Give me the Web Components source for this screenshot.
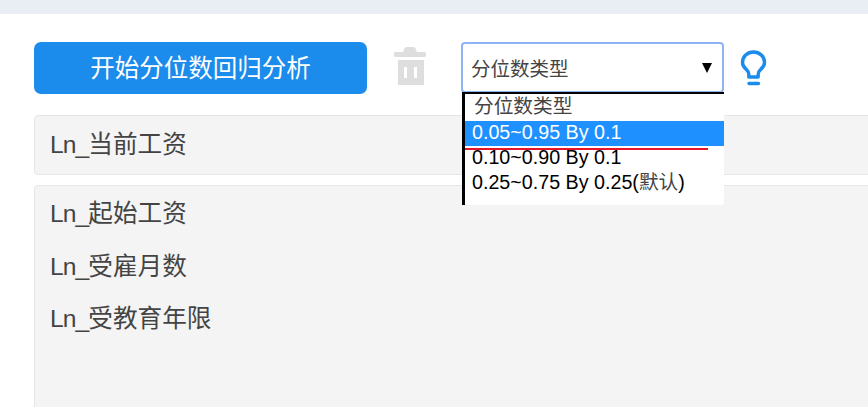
<!DOCTYPE html>
<html lang="zh"><head><meta charset="utf-8">
<style>
html,body{margin:0;padding:0;background:#fff;overflow:hidden;height:407px}
body{font-family:"Liberation Sans","Noto Sans CJK SC",sans-serif}
</style></head><body>
<analysis-page></analysis-page>
<template id="t-page">
<style>
:host{display:block;height:407px;overflow:hidden;color:#444}
.top{height:14px;background:#e9edf4}
.main{padding:28px 0 0 34px;width:860px;box-sizing:content-box}
.bar{display:flex;align-items:flex-start;height:52px;margin-bottom:21px}
.list{display:flex;flex-direction:column;gap:10px}
trash-icon{margin:5px 0 0 27px}
quantile-select{margin-left:35px}
bulb-icon{margin:8px 0 0 15px}
.l{letter-spacing:-.9px}
</style>
<div class="top"></div>
<div class="main">
<div class="bar">
<start-button>开始分位数回归分析</start-button>
<trash-icon></trash-icon>
<quantile-select></quantile-select>
<bulb-icon></bulb-icon>
</div>
<div class="list">
<var-panel style="height:60px;--pt:12px"><var-item><span class="l">Ln_</span>当前工资</var-item></var-panel>
<var-panel style="height:240px;--pt:11px"><var-item><span class="l">Ln_</span>起始工资</var-item><var-item><span class="l">Ln_</span>受雇月数</var-item><var-item><span class="l">Ln_</span>受教育年限</var-item></var-panel>
</div>
</div>
</template>
<script>
function def(name,html){customElements.define(name,class extends HTMLElement{constructor(){super();this.attachShadow({mode:'open'}).innerHTML=html}})}
def('start-button',`<style>:host{display:flex;align-items:center;justify-content:center;width:333px;height:52px;box-sizing:border-box;background:#1b8bec;border-radius:7px;color:#fff;font-size:24.5px;padding-bottom:3px}</style><slot></slot>`);
def('trash-icon',`<style>:host{display:block;width:32px;height:38px}svg{display:block}</style><svg width="32" height="38" viewBox="0 0 32 38"><path fill="#dedede" d="M9 5L10.500 1.500C11 .5 12 0 13 0h6c1 0 2 .5 2.500 1.500L23 5h7.500c.8 0 1.500.7 1.500 1.500v2c0 .8-.7 1.500-1.500 1.500h-29C.7 10 0 9.300 0 8.500v-2C0 5.700.7 5 1.500 5z"/><path fill="#dedede" fill-rule="evenodd" d="M4 13h26v25H4zM10 20v11h3V20zm10 0v11h3V20z"/></svg>`);
def('bulb-icon',`<style>:host{display:block;width:30px;height:38px}svg{display:block}</style><svg width="30" height="38" viewBox="0 0 30 38" fill="none" stroke="#1b8bec" stroke-width="3.400"><path d="M9.800 27v-3c0-2-1-3-2.200-4.200C5.300 17.800 3.500 16 3.500 12.500 3.500 6.500 8.300 2 14.500 2S25.500 6.500 25.500 12.500c0 3.500-1.800 5.300-4.100 7.300-1.200 1.200-2.200 2.200-2.200 4.200v3z" stroke-linejoin="round"/><path d="M10 33.500h9.500" stroke-linecap="round"/></svg>`);
def('var-panel',`<style>:host{display:block;box-sizing:border-box;background:#f4f4f4;border:1px solid #e6e6e6;border-radius:4px;padding:var(--pt) 0 0 15px;width:100%}</style><slot></slot>`);
def('var-item',`<style>:host{display:block;font-size:24.6px;line-height:34px;height:52.500px;color:#444;white-space:nowrap}</style><slot></slot>`);
def('drop-option',`<style>:host{display:block;height:25px;line-height:23px;padding-left:7px;font-size:19.700px;color:#000;white-space:nowrap}:host([sel]){background:#1e90ff;color:#fff}:host([ph]){color:#444;padding-left:9px}</style><slot></slot>`);
def('quantile-select',`<style>
:host{display:block;position:relative;width:263px;height:52px}
.box{box-sizing:border-box;width:263px;height:51px;border:2px solid #8fb4f4;border-radius:4px;background:#fff;display:flex;align-items:center;justify-content:space-between;padding:0 10px 0 8px;font-size:19.500px;color:#444}
.arrow{width:0;height:0;border-left:5.500px solid transparent;border-right:5.500px solid transparent;border-top:10px solid #000}
.menu{position:absolute;left:1px;top:50px;width:262px;height:113px;box-sizing:border-box;background:#fff;border-left:3px solid #000;border-top:2px solid #000;border-radius:0 0 3px 0;padding-top:1px}
.red{position:absolute;left:0;top:54px;width:243px;height:1.500px;background:#e8142a}
.d{color:#444}
</style>
<div class="box"><span>分位数类型</span><span class="arrow"></span></div>
<div class="menu">
<drop-option ph style="height:26px;line-height:22px">分位数类型</drop-option>
<drop-option sel>0.05~0.95 By 0.1</drop-option>
<drop-option>0.10~0.90 By 0.1</drop-option>
<drop-option>0.25~0.75 By 0.25(<span class="d">默认</span>)</drop-option>
<div class="red"></div>
</div>`);
customElements.define('analysis-page',class extends HTMLElement{constructor(){super();this.attachShadow({mode:'open'}).appendChild(document.getElementById('t-page').content.cloneNode(true))}});
</script>
</body></html>
